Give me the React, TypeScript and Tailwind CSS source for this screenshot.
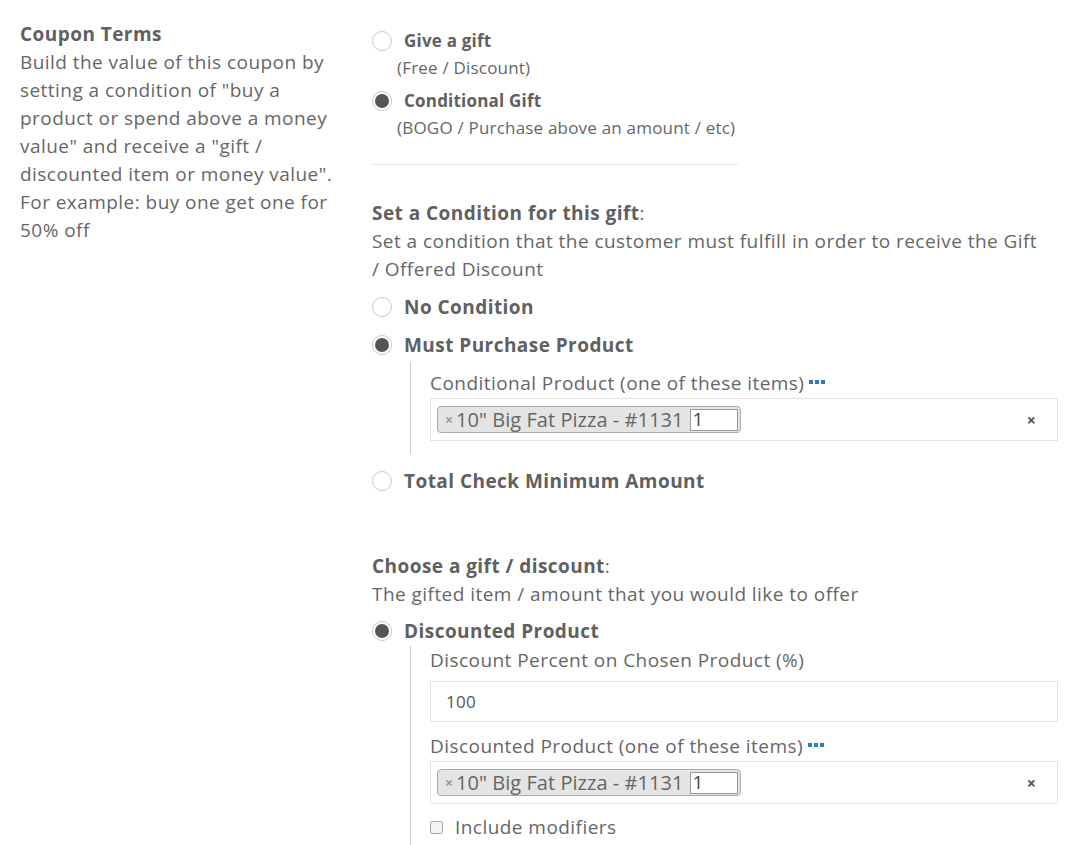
import React from "react";

const font = { fontFamily: '"Open Sans", "Liberation Sans", sans-serif' };

function Radio({ checked }: { checked?: boolean }) {
  return (
    <span className="flex h-5 w-5 shrink-0 items-center justify-center rounded-full border border-[#c8c8c8] bg-white">
      {checked && <span className="h-[14px] w-[14px] rounded-full bg-[#555]" />}
    </span>
  );
}

function RadioRow({ label, checked }: { label: string; checked?: boolean }) {
  return (
    <div className="flex h-7 items-center gap-3">
      <Radio checked={checked} />
      <span className="text-[19px] font-bold tracking-[0.45px] text-[#606060]">{label}</span>
    </div>
  );
}

function Dots() {
  return (
    <span className="ml-[5px] inline-flex translate-y-[-3px] gap-[2px] align-middle">
      <span className="h-[4px] w-[4px] bg-[#2f7bbf]" />
      <span className="h-[4px] w-[4px] bg-[#2f7bbf]" />
      <span className="h-[4px] w-[4px] bg-[#2f7bbf]" />
    </span>
  );
}

function ProductSelect() {
  return (
    <div className="mt-px flex h-[43px] items-center border border-[#e4e4e4] bg-white pl-[6px] pr-[21px]">
      <div className="flex h-[27px] items-center rounded-[4px] border border-[#aaa] bg-[#e4e4e4] pl-[7px] pr-[2px]">
        <span className="mr-[3px] text-[14px] font-bold leading-none text-[#999]">×</span>
        <span className="text-[20px] leading-none tracking-[0.05px] text-[#666]">10" Big Fat Pizza - #1131</span>
        <span className="ml-[6px] flex h-[22px] w-[48px] items-center border border-[#999] bg-white pl-[2px] text-[19px] leading-none text-[#444]">
          1
        </span>
      </div>
      <span className="ml-auto text-[16px] font-bold text-[#555]">×</span>
    </div>
  );
}

export default function App() {
  return (
    <div className="flex min-h-[845px] bg-white text-[#666]" style={font}>
      {/* Left description */}
      <div className="w-[372px] shrink-0 pl-5 pr-[30px] pt-5">
        <div className="text-[19px] font-bold leading-7 tracking-[0.45px] text-[#606060]">Coupon Terms</div>
        <p className="text-[19px] leading-7 tracking-[0.45px]">
          Build the value of this coupon by setting a condition of "buy a product or spend above a money value" and
          receive a "gift / discounted item or money value". For example: buy one get one for 50% off
        </p>
      </div>

      {/* Right form */}
      <div className="flex-1 pr-[11px] pt-[27px]">
        <div className="flex h-7 items-center gap-3">
          <Radio />
          <span className="text-[17px] font-bold tracking-[0.2px] text-[#606060]">Give a gift</span>
        </div>
        <div className="ml-[25px] text-[17px] leading-[26px] tracking-[0.2px]">(Free / Discount)</div>
        <div className="mt-[6px] flex h-7 items-center gap-3">
          <Radio checked />
          <span className="text-[17px] font-bold tracking-[0.2px] text-[#606060]">Conditional Gift</span>
        </div>
        <div className="ml-[25px] text-[17px] leading-[26px] tracking-[0.2px]">
          (BOGO / Purchase above an amount / etc)
        </div>
        <hr className="mt-[23px] w-[366px] border-[#e8e8e8]" />

        {/* Condition */}
        <div className="mt-[34px] text-[19px] leading-7 tracking-[0.45px]">
          <span className="font-bold text-[#606060]">Set a Condition for this gift</span>:
        </div>
        <p className="max-w-[672px] text-[19px] leading-7 tracking-[0.45px]">
          Set a condition that the customer must fulfill in order to receive the Gift / Offered Discount
        </p>
        <div className="mt-[10px] flex flex-col gap-[10px]">
          <RadioRow label="No Condition" />
          <RadioRow label="Must Purchase Product" checked />
        </div>
        <div className="ml-[38px] mt-[3px] border-l border-[#ccc] pb-[13px] pl-[19px] pt-[7px]">
          <div className="text-[19px] leading-7 tracking-[0.45px]">
            Conditional Product (one of these items)
            <Dots />
          </div>
          <ProductSelect />
        </div>
        <div className="mt-[13px]">
          <RadioRow label="Total Check Minimum Amount" />
        </div>

        {/* Gift */}
        <div className="mt-[57px] text-[19px] leading-7 tracking-[0.45px]">
          <span className="font-bold text-[#606060]">Choose a gift / discount</span>:
        </div>
        <p className="text-[19px] leading-7 tracking-[0.45px]">The gifted item / amount that you would like to offer</p>
        <div className="mt-[9px]">
          <RadioRow label="Discounted Product" checked />
        </div>
        <div className="ml-[38px] mt-px border-l border-[#ccc] pb-[6px] pl-[19px]">
          <div className="text-[19px] leading-7 tracking-[0.45px]">Discount Percent on Chosen Product (%)</div>
          <div className="mt-[7px] flex h-[41px] items-center border border-[#e4e4e4] pl-[15px] text-[17px] tracking-[0.3px] text-[#555]">
            100
          </div>
          <div className="mt-[10px] text-[19px] leading-7 tracking-[0.45px]">
            Discounted Product (one of these items)
            <Dots />
          </div>
          <ProductSelect />
          <label className="mt-[9px] flex h-7 items-center gap-3">
            <span className="h-[13px] w-[13px] rounded-[2px] border border-[#aaa] bg-[#f3f3f3]" />
            <span className="text-[19px] tracking-[0.45px]">Include modifiers</span>
          </label>
        </div>
      </div>
    </div>
  );
}
